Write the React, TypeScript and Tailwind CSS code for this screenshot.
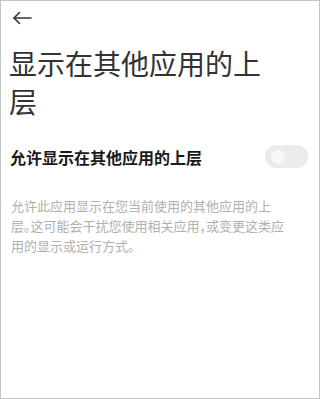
import React from 'react';

export default function App() {
  return (
    <div
      className="w-[320px] h-[399px] border border-[#c4c4c4] bg-white overflow-hidden"
      style={{ fontFamily: '"Noto Sans CJK SC", "Noto Sans", sans-serif' }}
    >
      <div className="h-[34px] flex items-center pl-[11px]">
        <svg width="20" height="14" viewBox="0 0 20 14" fill="none" stroke="#333" strokeWidth="1.6" strokeLinecap="round" strokeLinejoin="round">
          <path d="M19 7H2" />
          <path d="M7.5 1.5L2 7l5.5 5.5" />
        </svg>
      </div>
      <h1 className="mt-[9px] px-[8px] pr-[40px] text-[28px] leading-[38px] font-normal text-[#333]">
        显示在其他应用的上层
      </h1>
      <div className="mt-[25px] flex items-center justify-between pl-[9px] pr-[11px]">
        <span className="text-[16px] font-bold text-[#1a1a1a] leading-[22px]">允许显示在其他应用的上层</span>
        <div className="w-[43px] h-[23px] rounded-full bg-[#ebebeb] flex items-center pl-[6px]">
          <div className="w-[14px] h-[14px] rounded-full bg-[#f8f8f8]" />
        </div>
      </div>
      <p className="mt-[28px] pl-[10px] pr-[32px] text-[13px] leading-[20px] text-[#b0b0b0] [font-feature-settings:'halt']">
        允许此应用显示在您当前使用的其他应用的上层。这可能会干扰您使用相关应用，或变更这类应用的显示或运行方式。
      </p>
    </div>
  );
}
